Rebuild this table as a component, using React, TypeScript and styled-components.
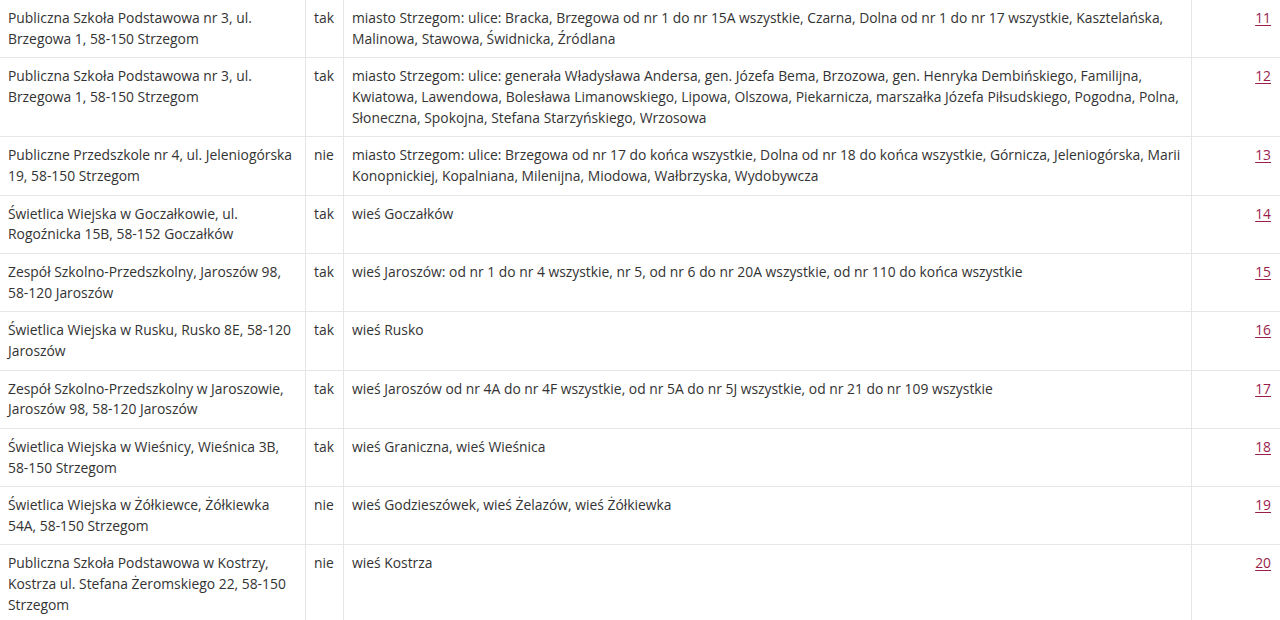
import React from "react";
import styled, { createGlobalStyle } from "styled-components";

const GlobalStyle = createGlobalStyle`
  body {
    margin: 0;
    background: #fff;
    font-family: "Open Sans", "Noto Sans", sans-serif;
    color: #333;
    overflow: hidden;
  }
`;

const Table = styled.table`
  border-collapse: collapse;
  table-layout: fixed;
  width: 1290px;
  margin: -1px 0 0 -1px;
  font-size: 13.86px;
  line-height: 20.65px;
`;

const Col = styled.col<{ $w?: number }>`
  width: ${(p) => (p.$w ? `${p.$w}px` : "auto")};
`;

const Row = styled.tr`
  border-top: 1px solid #e6e6e6;
  border-bottom: 1px solid #e6e6e6;
`;

const Cell = styled.td`
  border-left: 1px solid #e6e6e6;
  border-right: 1px solid #e6e6e6;
  padding: 8px;
  vertical-align: top;
  text-align: left;
`;

const NumCell = styled(Cell)`
  text-align: right;
  padding-right: 17px;
`;

const PageLink = styled.a`
  color: #9a1d4c;
  text-decoration: underline;
  text-underline-offset: 2px;
`;

interface IRow {
  place: string;
  access: string;
  area: string;
  no: number;
}

const rows: IRow[] = [
  {
    place: "Publiczna Szkoła Podstawowa nr 3, ul. Brzegowa 1, 58-150 Strzegom",
    access: "tak",
    area: "miasto Strzegom: ulice: Bracka, Brzegowa od nr 1 do nr 15A wszystkie, Czarna, Dolna od nr 1 do nr 17 wszystkie, Kasztelańska, Malinowa, Stawowa, Świdnicka, Źródlana",
    no: 11,
  },
  {
    place: "Publiczna Szkoła Podstawowa nr 3, ul. Brzegowa 1, 58-150 Strzegom",
    access: "tak",
    area: "miasto Strzegom: ulice: generała Władysława Andersa, gen. Józefa Bema, Brzozowa, gen. Henryka Dembińskiego, Familijna, Kwiatowa, Lawendowa, Bolesława Limanowskiego, Lipowa, Olszowa, Piekarnicza, marszałka Józefa Piłsudskiego, Pogodna, Polna, Słoneczna, Spokojna, Stefana Starzyńskiego, Wrzosowa",
    no: 12,
  },
  {
    place: "Publiczne Przedszkole nr 4, ul. Jeleniogórska 19, 58-150 Strzegom",
    access: "nie",
    area: "miasto Strzegom: ulice: Brzegowa od nr 17 do końca wszystkie, Dolna od nr 18 do końca wszystkie, Górnicza, Jeleniogórska, Marii Konopnickiej, Kopalniana, Milenijna, Miodowa, Wałbrzyska, Wydobywcza",
    no: 13,
  },
  {
    place: "Świetlica Wiejska w Goczałkowie, ul. Rogoźnicka 15B, 58-152 Goczałków",
    access: "tak",
    area: "wieś Goczałków",
    no: 14,
  },
  {
    place: "Zespół Szkolno-Przedszkolny, Jaroszów 98, 58-120 Jaroszów",
    access: "tak",
    area: "wieś Jaroszów: od nr 1 do nr 4 wszystkie, nr 5, od nr 6 do nr 20A wszystkie, od nr 110 do końca wszystkie",
    no: 15,
  },
  {
    place: "Świetlica Wiejska w Rusku, Rusko 8E, 58-120 Jaroszów",
    access: "tak",
    area: "wieś Rusko",
    no: 16,
  },
  {
    place: "Zespół Szkolno-Przedszkolny w Jaroszowie, Jaroszów 98, 58-120 Jaroszów",
    access: "tak",
    area: "wieś Jaroszów od nr 4A do nr 4F wszystkie, od nr 5A do nr 5J wszystkie, od nr 21 do nr 109 wszystkie",
    no: 17,
  },
  {
    place: "Świetlica Wiejska w Wieśnicy, Wieśnica 3B, 58-150 Strzegom",
    access: "tak",
    area: "wieś Graniczna, wieś Wieśnica",
    no: 18,
  },
  {
    place: "Świetlica Wiejska w Żółkiewce, Żółkiewka 54A, 58-150 Strzegom",
    access: "nie",
    area: "wieś Godzieszówek, wieś Żelazów, wieś Żółkiewka",
    no: 19,
  },
  {
    place: "Publiczna Szkoła Podstawowa w Kostrzy, Kostrza ul. Stefana Żeromskiego 22, 58-150 Strzegom",
    access: "nie",
    area: "wieś Kostrza",
    no: 20,
  },
];

export default function App() {
  return (
    <>
      <GlobalStyle />
      <Table>
        <colgroup>
          <Col $w={306} />
          <Col $w={38} />
          <Col $w={848} />
          <Col />
        </colgroup>
        <tbody>
          {rows.map((r) => (
            <Row key={r.no}>
              <Cell>{r.place}</Cell>
              <Cell>{r.access}</Cell>
              <Cell>{r.area}</Cell>
              <NumCell>
                <PageLink href="#">{r.no}</PageLink>
              </NumCell>
            </Row>
          ))}
        </tbody>
      </Table>
    </>
  );
}
